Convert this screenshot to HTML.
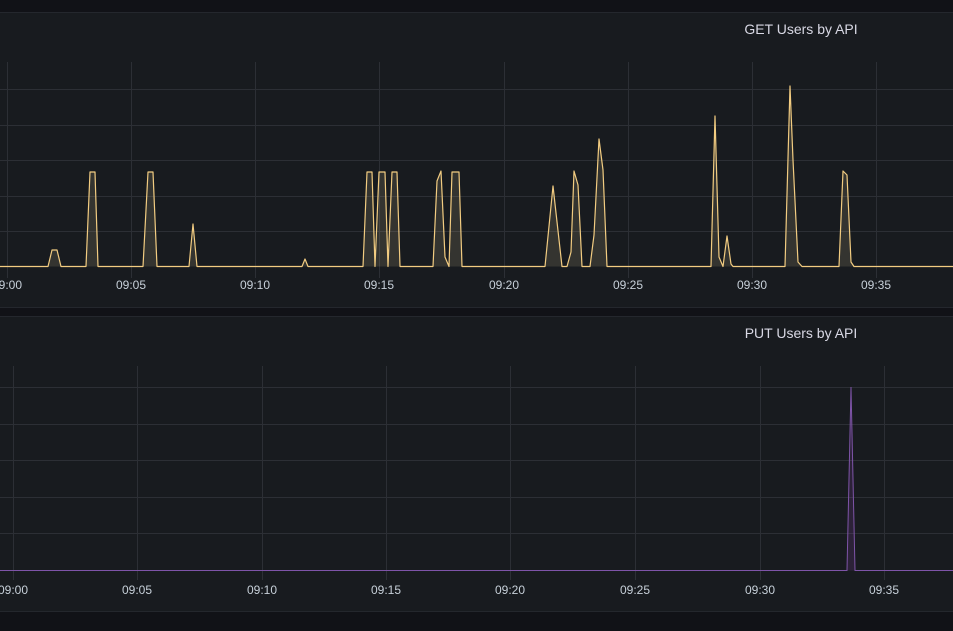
<!DOCTYPE html><html><head><style>
html,body{margin:0;padding:0;background:#111217;width:953px;height:631px;overflow:hidden}
svg{display:block}
text{font-family:"Liberation Sans",sans-serif}
</style></head><body>
<svg width="953" height="631" viewBox="0 0 953 631">
<rect width="953" height="631" fill="#111217"/>
<rect x="-2" y="12.5" width="960" height="295" fill="#181b1f" stroke="#24272d"/>
<rect x="-2" y="316.5" width="960" height="295" fill="#181b1f" stroke="#24272d"/>
<text x="801" y="34" fill="#d8d8e4" font-size="14" text-anchor="middle">GET Users by API</text>
<text x="801" y="338" fill="#d8d8e4" font-size="14" text-anchor="middle">PUT Users by API</text>
<g stroke="#2c2f35" stroke-width="1">
<path d="M0 89.5H953M0 125.5H953M0 160.5H953M0 196.5H953M0 231.5H953"/>
<path d="M7.5 62V278M131.5 62V278M255.5 62V278M379.5 62V278M504.5 62V278M628.5 62V278M752.5 62V278M876.5 62V278"/>
<path d="M0 387.5H953M0 424.5H953M0 460.5H953M0 497.5H953M0 533.5H953"/>
<path d="M13.5 366V580M137.5 366V580M262.5 366V580M386.5 366V580M510.5 366V580M635.5 366V580M760.5 366V580M884.5 366V580"/>
</g>
<g fill="#c7d0d9" font-size="12" text-anchor="middle">
<text x="7" y="289">09:00</text><text x="131" y="289">09:05</text><text x="255" y="289">09:10</text><text x="379" y="289">09:15</text><text x="504" y="289">09:20</text><text x="628" y="289">09:25</text><text x="752" y="289">09:30</text><text x="876" y="289">09:35</text>
<text x="13" y="594">09:00</text><text x="137" y="594">09:05</text><text x="262" y="594">09:10</text><text x="386" y="594">09:15</text><text x="510" y="594">09:20</text><text x="635" y="594">09:25</text><text x="760" y="594">09:30</text><text x="884" y="594">09:35</text>
</g>
<path fill="rgba(250,222,160,0.13)" stroke="#f2cc81" stroke-width="1.2" stroke-linejoin="round" d="M0 266.5H48L52 250H57L61 266.5H86L90 172H95L98 266.5H143L148 172H153L157 266.5H189L193 224L197 266.5H302L305 259L308 266.5H363L367 172H372L375 266.5L379 172H385L388 266.5L392 172H397L400 266.5H433L437 181L441 171L445 257L449 266.5L452 172H459L462 266.5H545L553 186L562 266.5H567L571 252L574 171L578 185L582 266.5H590L594 235L599 139L603 170L607 266.5H711L715 116L719 257L723 266.5L727 236L731 264L733 266.5H785L790 86L793 160L798 262L802 266.5H839L843 171L847 175L851 262L854 266.5H953"/>
<path fill="rgba(163,82,204,0.15)" stroke="#7e54a8" stroke-width="1" d="M0 570.5H847L851 387L855 570.5H953"/>
</svg>
</body></html>
